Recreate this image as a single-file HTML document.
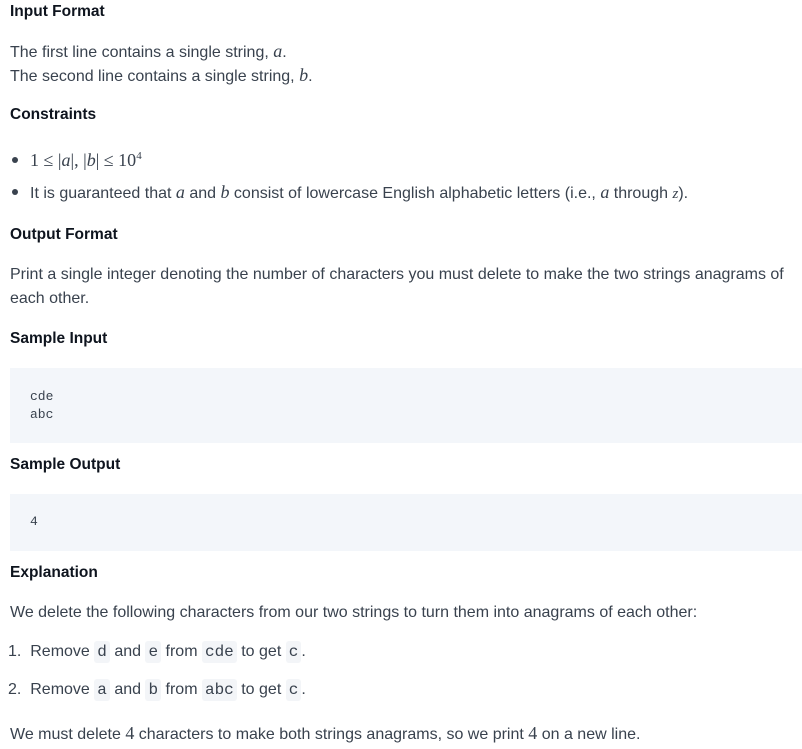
<!DOCTYPE html>
<html><head><meta charset="utf-8"><style>
body{margin:0;width:802px;height:749px;background:#fff;position:relative;overflow:hidden;font-family:"Liberation Sans",sans-serif;color:#39424e;font-size:16px}
.l{position:absolute;left:10px;line-height:20px;white-space:nowrap}
h{font-weight:bold;font-size:15.5px;color:#0e141e}
i.m{font-family:"Liberation Serif",serif;font-size:18px}
.box{position:absolute;left:10px;width:792px;background:#f3f6fa}
.mono{font-family:"Liberation Mono",monospace;font-size:13px;position:absolute;left:30px;line-height:18px}
code{font-family:"Liberation Mono",monospace;font-size:16px;background:#f3f5f8;padding:2px 3px;border-radius:3px}
.dot{display:inline-block;width:6px;height:6px;border-radius:3px;background:#39424e;margin:0 12px 3px 2px;vertical-align:middle}
.s{font-family:'Liberation Serif',serif;font-size:18px}
</style></head><body>
<div class="l" style="top:2px"><h>Input Format</h></div>
<div class="l" style="top:41px">The first line contains a single string, <i class="m">a</i>.</div>
<div class="l" style="top:65px">The second line contains a single string, <i class="m">b</i>.</div>
<div class="l" style="top:105px"><h>Constraints</h></div>
<div class="l" style="top:146px"><span class="dot"></span><span class="s">1 ≤ |<i>a</i>|, |<i>b</i>| ≤ 10<sup style="font-size:11px">4</sup></span></div>
<div class="l" style="top:182px"><span class="dot"></span>It is guaranteed that <i class="m">a</i> and <i class="m">b</i> consist of lowercase English alphabetic letters (i.e., <i class="m">a</i> through <i class="m" style="font-size:15px">z</i>).</div>
<div class="l" style="top:225px"><h>Output Format</h></div>
<div class="l" style="top:265px">Print a single integer denoting the number of characters you must delete to make the two strings anagrams of</div>
<div class="l" style="top:289px">each other.</div>
<div class="l" style="top:329px"><h>Sample Input</h></div>
<div class="box" style="top:368px;height:75px"></div>
<div class="mono" style="top:388px">cde<br>abc</div>
<div class="l" style="top:455px"><h>Sample Output</h></div>
<div class="box" style="top:494px;height:57px"></div>
<div class="mono" style="top:513px">4</div>
<div class="l" style="top:563px"><h>Explanation</h></div>
<div class="l" style="top:603px">We delete the following characters from our two strings to turn them into anagrams of each other:</div>
<div class="l" style="top:642px;left:8px">1.&nbsp; Remove <code>d</code> and <code>e</code> from <code>cde</code> to get <code>c</code>.</div>
<div class="l" style="top:680px;left:8px">2.&nbsp; Remove <code>a</code> and <code>b</code> from <code>abc</code> to get <code>c</code>.</div>
<div class="l" style="top:723px">We must delete <span class="s">4</span> characters to make both strings anagrams, so we print <span class="s">4</span> on a new line.</div>
</body></html>
